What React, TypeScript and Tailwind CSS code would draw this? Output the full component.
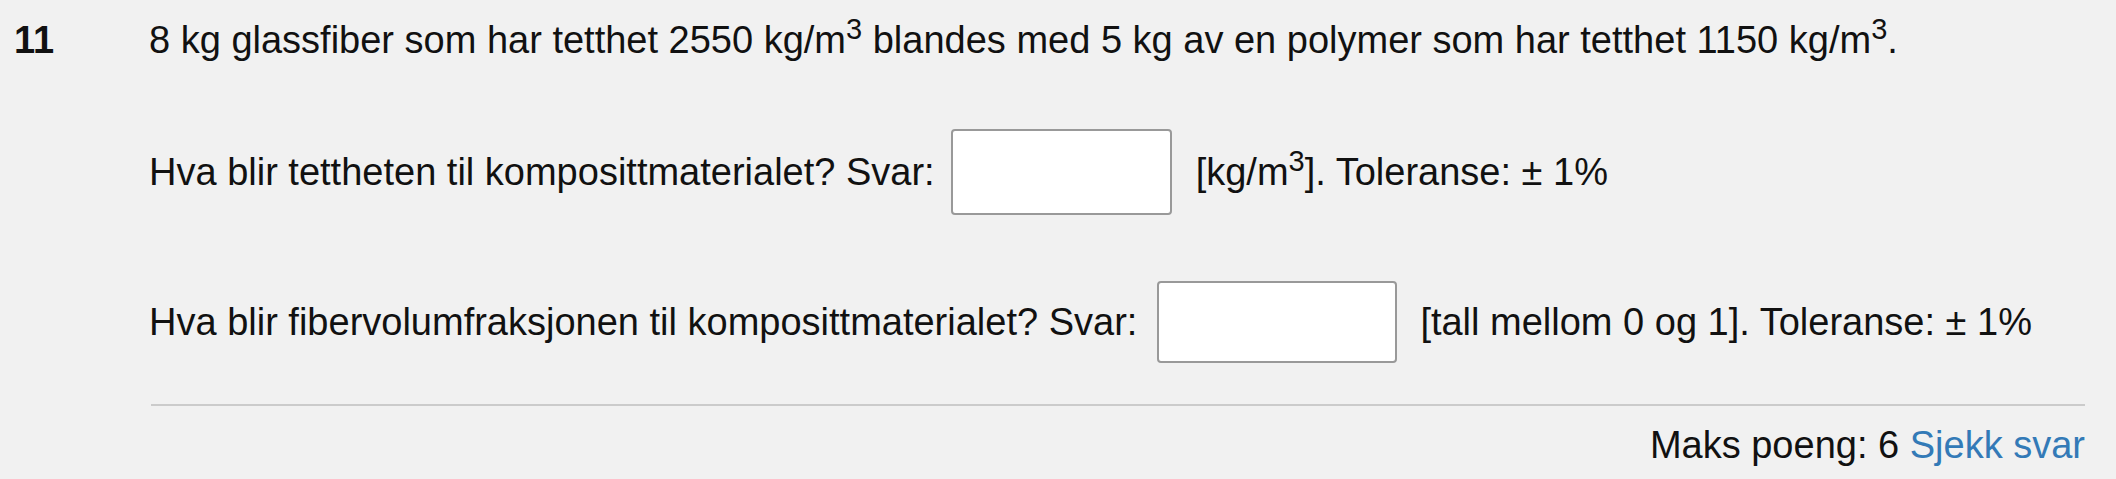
const Sup = ({ children }: { children: React.ReactNode }) => (
  <sup className="text-[29px]">{children}</sup>
);

const AnswerBox = ({ className }: { className: string }) => (
  <input
    type="text"
    className={`bg-white border-2 border-[#999] rounded-[4px] outline-none ${className}`}
  />
);

export default function App() {
  return (
    <div className="min-h-screen bg-[#f1f1f1] text-[#111] font-['Liberation_Sans',Arial,sans-serif] text-[38px] leading-[44px]">
      <div className="flex pt-[18px] pr-[31px]">
        {/* Question number */}
        <div className="w-[149px] shrink-0 pl-[14px] font-bold">11</div>

        {/* Question body */}
        <div className="flex-1">
          <p>
            8 kg glassfiber som har tetthet 2550 kg/m<Sup>3</Sup> blandes med 5 kg av en polymer som har
            tetthet 1150 kg/m<Sup>3</Sup>.
          </p>

          <div className="flex items-center mt-[67px]">
            <span>Hva blir tettheten til komposittmaterialet? Svar:</span>
            <AnswerBox className="ml-[16px] mr-[24px] w-[221px] h-[86px]" />
            <span>
              [kg/m<Sup>3</Sup>]. Toleranse: ± 1%
            </span>
          </div>

          <div className="flex items-center mt-[66px]">
            <span>Hva blir fibervolumfraksjonen til komposittmaterialet? Svar:</span>
            <AnswerBox className="ml-[20px] mr-[23px] w-[240px] h-[82px]" />
            <span>[tall mellom 0 og 1]. Toleranse: ± 1%</span>
          </div>

          <div className="mt-[41px] ml-[2px] h-[2px] bg-[#cbcbcb]" />

          <div className="flex justify-end mt-[17px]">
            <span>
              Maks poeng: 6 <a className="text-[#337ab7] cursor-pointer">Sjekk svar</a>
            </span>
          </div>
        </div>
      </div>
    </div>
  );
}
